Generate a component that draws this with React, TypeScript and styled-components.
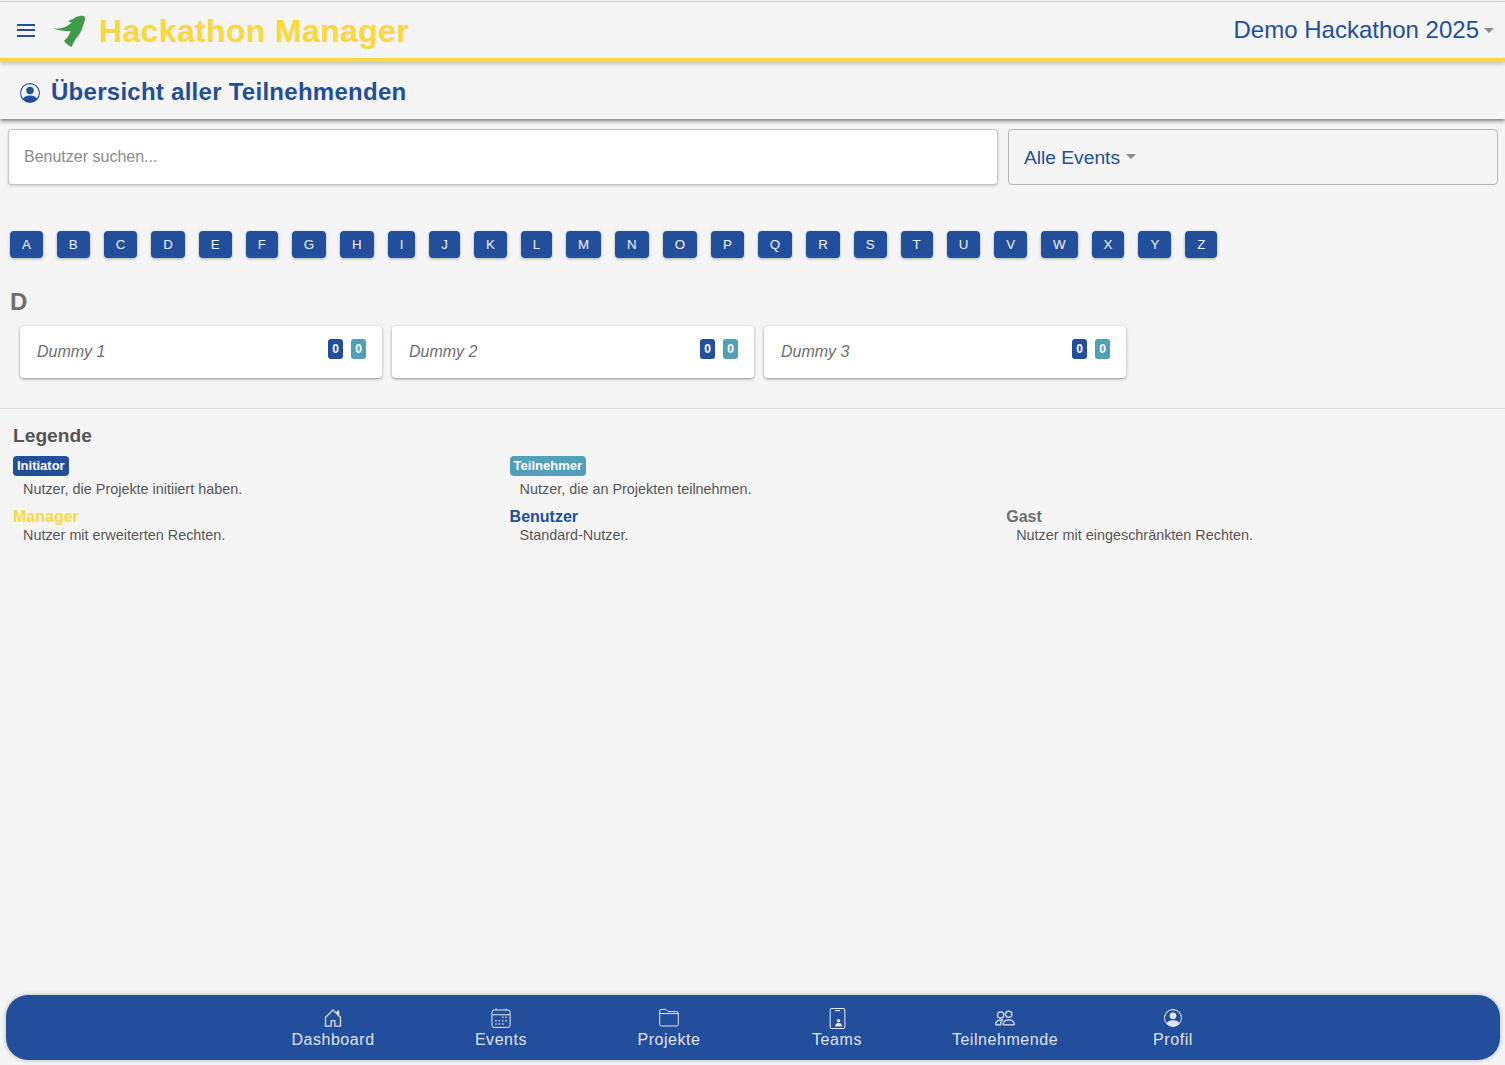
import React from "react";
import styled, { createGlobalStyle } from "styled-components";
import { BsHouseDoor, BsPeople, BsPersonCircle } from "react-icons/bs";

const BLUE = "#234e9b";
const YELLOW = "#fbd93d";
const TEAL = "#50a0b9";

const Global = createGlobalStyle`
  html, body { margin: 0; padding: 0; background: #f5f5f5; }
  body { font-family: "Liberation Sans", Arial, sans-serif; }
  * { box-sizing: border-box; }
`;

const Page = styled.div`
  height: 1065px;
  display: flex;
  flex-direction: column;
  overflow: hidden;
  background: #f5f5f5;
`;

const TopBar = styled.header`
  height: 61px;
  margin-top: 1px;
  border-top: 1px solid #cfcfcf;
  border-bottom: 4px solid ${YELLOW};
  display: flex;
  align-items: center;
  padding: 0 11px 0 17px;
  background: #f5f5f5;
  box-shadow: 0 2px 4px rgba(0, 0, 0, 0.2);
  position: relative;
  z-index: 2;
`;

const Burger = styled.div`
  width: 18px;
  height: 13px;
  display: flex;
  flex-direction: column;
  justify-content: space-between;
  margin-right: 17px;
  span { display: block; height: 2px; background: ${BLUE}; }
`;

const Logo = styled.svg`
  width: 36px;
  height: 34px;
  margin-right: 11px;
  flex: none;
`;

const Brand = styled.div`
  padding-top: 2px;
  font-size: 32px;
  font-weight: 700;
  letter-spacing: 0.35px;
  color: ${YELLOW};
  text-shadow: 0 0 1px rgba(0, 0, 0, 0.08);
`;

const EventSwitch = styled.div`
  margin-left: auto;
  display: flex;
  align-items: center;
  gap: 5px;
  font-size: 24px;
  color: ${BLUE};
`;

const Caret = styled.span`
  display: inline-block;
  border-left: 5px solid transparent;
  border-right: 5px solid transparent;
  border-top: 5px solid #8a8a8a;
`;

const SubHeader = styled.div`
  height: 57px;
  display: flex;
  align-items: center;
  gap: 11px;
  padding: 2px 0 0 20px;
  background: #f5f5f5;
  box-shadow: 0 2px 4px rgba(0, 0, 0, 0.5);
  position: relative;
  z-index: 1;
`;

const SubIcon = styled(BsPersonCircle)`
  width: 20px;
  height: 20px;
  margin-top: 3px;
  color: ${BLUE};
`;

const SubTitle = styled.h1`
  margin: 0;
  font-size: 24px;
  font-weight: 700;
  letter-spacing: 0.27px;
  color: ${BLUE};
`;

const Filters = styled.div`
  display: flex;
  gap: 10px;
  padding: 10px 7px 0 8px;
`;

const Search = styled.div`
  flex: 0 0 990px;
  height: 56px;
  display: flex;
  align-items: center;
  padding: 0 15px;
  background: #fff;
  border: 1px solid #c6c6c6;
  border-radius: 4px;
  box-shadow: 0 1px 3px rgba(0, 0, 0, 0.18);
  font-size: 16px;
  color: #8b8b8b;
`;

const Select = styled.div`
  flex: 1;
  height: 56px;
  display: flex;
  align-items: center;
  gap: 6px;
  padding: 2px 15px 0;
  border: 1px solid #b4b4b4;
  border-radius: 4px;
  font-size: 19.2px;
  color: ${BLUE};
  ${Caret} { margin-bottom: 3px; }
`;

const Letters = styled.div`
  display: flex;
  gap: 13.94px;
  padding: 46px 0 0 10px;
`;

const Letter = styled.div`
  height: 27px;
  padding: 0 12px;
  display: flex;
  align-items: center;
  background: ${BLUE};
  border-radius: 4px;
  box-shadow: 0 1px 3px rgba(0, 0, 0, 0.3);
  color: #f1f4fa;
  font-size: 13.33px;
`;

const GroupLetter = styled.h2`
  margin: 31px 0 0 10px;
  font-size: 24px;
  line-height: 25px;
  font-weight: 700;
  color: #6f6f6f;
`;

const Cards = styled.div`
  display: flex;
  gap: 10px;
  padding: 12px 0 0 20px;
`;

const Card = styled.div`
  width: 362px;
  height: 52px;
  display: flex;
  justify-content: space-between;
  padding: 13px 16px 0 17px;
  background: #fff;
  border-radius: 4px;
  box-shadow: 0 1px 3px rgba(0, 0, 0, 0.4);
`;

const CardName = styled.span`
  font-size: 16px;
  font-style: italic;
  line-height: 25px;
  color: #6f6f6f;
`;

const Counts = styled.div`
  display: flex;
  gap: 8px;
`;

const Count = styled.span<{ $tone: string }>`
  width: 15px;
  height: 20px;
  display: flex;
  align-items: center;
  justify-content: center;
  background: ${(p) => p.$tone};
  border-radius: 3px;
  color: #fff;
  font-size: 12px;
  font-weight: 700;
`;

const Legend = styled.section`
  margin-top: 30px;
  padding: 15px 13px 0;
  border-top: 1px solid #dedede;
`;

const LegendTitle = styled.h3`
  margin: 0 0 9px;
  font-size: 19.2px;
  line-height: 23px;
  font-weight: 700;
  color: #555;
`;

const LegendGrid = styled.div`
  display: grid;
  grid-template-columns: repeat(3, 496.6px);
  grid-auto-rows: 45px;
`;

const LegendItem = styled.div`
  display: flex;
  flex-direction: column;
  align-items: flex-start;
`;

const RoleBadge = styled.span<{ $tone: string }>`
  height: 20px;
  display: flex;
  align-items: center;
  padding: 0 4px 1px;
  background: ${(p) => p.$tone};
  border-radius: 4px;
  color: #fff;
  font-size: 13px;
  font-weight: 700;
`;

const RoleName = styled.span<{ $tone: string }>`
  height: 20px;
  line-height: 20px;
  margin-top: 6px;
  color: ${(p) => p.$tone};
  font-size: 16px;
  font-weight: 700;
`;

const RoleText = styled.span<{ $tall?: boolean }>`
  padding-left: 10px;
  margin-top: ${(p) => (p.$tall ? "5px" : "0")};
  line-height: 17px;
  font-size: 14.4px;
  color: #555;
`;

const Spacer = styled.div`
  flex: 1;
`;

const BottomNav = styled.nav`
  flex: none;
  height: 65px;
  margin: 0 5px 5px 6px;
  display: flex;
  justify-content: center;
  background: ${BLUE};
  border-radius: 22px;
  box-shadow: 0 0 5px rgba(0, 0, 0, 0.25);
`;

const NavItem = styled.div`
  width: 168px;
  display: flex;
  flex-direction: column;
  align-items: center;
  padding-top: 12px;
  color: rgba(255, 255, 255, 0.87);
  font-size: 16px;
  letter-spacing: 0.55px;
  line-height: 19px;
`;

const NavIcon = styled.span<{ $size: number }>`
  height: 22px;
  margin-bottom: 1px;
  display: flex;
  align-items: center;
  svg { display: block; width: ${(p) => p.$size}px; height: ${(p) => p.$size}px; }
`;

const CalendarIcon = () => {
  const dots = [
    [11.7, 9.3], [15, 9.3],
    [5, 12.7], [8.3, 12.7], [11.7, 12.7], [15, 12.7],
    [5, 16], [8.3, 16], [11.7, 16],
  ];
  return (
    <svg viewBox="0 0 20 20" fill="none" stroke="currentColor" strokeWidth="1">
      <rect x="0.9" y="2" width="18.2" height="17.4" rx="2.2" />
      <path d="M1 6.8H19M5 0.5V2M15 0.5V2" />
      {dots.map(([x, y]) => (
        <rect key={`${x}-${y}`} x={x - 0.7} y={y - 0.7} width="1.4" height="1.4" fill="currentColor" stroke="none" />
      ))}
    </svg>
  );
};

const FolderIcon = () => (
  <svg viewBox="0 0 20 20" fill="none" stroke="currentColor" strokeWidth="1">
    <path d="M.7 16.4V3A1.6 1.6 0 0 1 2.3 1.4H7L9 3.6H17.7A1.6 1.6 0 0 1 19.3 5.2V16.4A1.6 1.6 0 0 1 17.7 18H2.3A1.6 1.6 0 0 1 .7 16.4Z" />
    <path d="M.7 5.6H19.3" />
  </svg>
);

const TeamIcon = () => (
  <svg viewBox="0 0 16 16">
    <rect x="2.4" y="0.4" width="11.2" height="15.2" rx="1.4" fill="none" stroke="currentColor" strokeWidth="0.8" />
    <path d="M6.5 2h3" stroke="currentColor" strokeWidth="0.8" strokeLinecap="round" />
    <circle cx="8.8" cy="9.7" r="1.3" fill="currentColor" />
    <path d="M6.2 14.1c0-1.8 1.1-2.6 2.6-2.6s2.6.8 2.6 2.6z" fill="currentColor" />
  </svg>
);

const letters = "ABCDEFGHIJKLMNOPQRSTUVWXYZ".split("");
const nav: [string, number, React.ReactNode][] = [
  ["Dashboard", 20, <BsHouseDoor />],
  ["Events", 20, <CalendarIcon />],
  ["Projekte", 20, <FolderIcon />],
  ["Teams", 21, <TeamIcon />],
  ["Teilnehmende", 20, <BsPeople />],
  ["Profil", 18, <BsPersonCircle />],
];

export default function App() {
  return (
    <Page>
      <Global />
      <TopBar>
        <Burger><span /><span /><span /></Burger>
        <Logo viewBox="0 0 36 34">
          <path
            fill="#419a49"
            d="M.7 15.3C4 15.9 9 15.6 13 14C16 12.5 18 11 19.7 9.7C18 9.5 17 8.7 16.3 7.7C18.5 7.5 20 6.3 22 5.3C24 3.8 26 3 28 3C30 2.6 32 3 32.6 3.7C33.4 5 33 6 33 7C32.5 9 31.5 11.5 30.7 13.7C30 16 29 18.3 28 20.3C26.5 23 24.5 24.7 23 27C22 28.7 20.7 31.5 19.7 33.7C18.5 33.5 17.3 33 16.3 32C14.7 31 13 29.5 12 27.7C13.5 26.5 15.2 25 16.3 23C17.3 21.5 18.2 20 18.7 18.3C15 18.3 12 18.2 9 17.6C6 17 3 16.2 .7 15.3Z"
          />
        </Logo>
        <Brand>Hackathon Manager</Brand>
        <EventSwitch>Demo Hackathon 2025<Caret /></EventSwitch>
      </TopBar>
      <SubHeader>
        <SubIcon />
        <SubTitle>Übersicht aller Teilnehmenden</SubTitle>
      </SubHeader>
      <Filters>
        <Search>Benutzer suchen...</Search>
        <Select>Alle Events<Caret /></Select>
      </Filters>
      <Letters>
        {letters.map((l) => <Letter key={l}>{l}</Letter>)}
      </Letters>
      <GroupLetter>D</GroupLetter>
      <Cards>
        {["Dummy 1", "Dummy 2", "Dummy 3"].map((n) => (
          <Card key={n}>
            <CardName>{n}</CardName>
            <Counts>
              <Count $tone={BLUE}>0</Count>
              <Count $tone={TEAL}>0</Count>
            </Counts>
          </Card>
        ))}
      </Cards>
      <Legend>
        <LegendTitle>Legende</LegendTitle>
        <LegendGrid>
          <LegendItem>
            <RoleBadge $tone={BLUE}>Initiator</RoleBadge>
            <RoleText $tall>Nutzer, die Projekte initiiert haben.</RoleText>
          </LegendItem>
          <LegendItem>
            <RoleBadge $tone={TEAL}>Teilnehmer</RoleBadge>
            <RoleText $tall>Nutzer, die an Projekten teilnehmen.</RoleText>
          </LegendItem>
          <div />
          <LegendItem>
            <RoleName $tone={YELLOW}>Manager</RoleName>
            <RoleText>Nutzer mit erweiterten Rechten.</RoleText>
          </LegendItem>
          <LegendItem>
            <RoleName $tone={BLUE}>Benutzer</RoleName>
            <RoleText>Standard-Nutzer.</RoleText>
          </LegendItem>
          <LegendItem>
            <RoleName $tone="#6f6f6f">Gast</RoleName>
            <RoleText>Nutzer mit eingeschränkten Rechten.</RoleText>
          </LegendItem>
        </LegendGrid>
      </Legend>
      <Spacer />
      <BottomNav>
        {nav.map(([label, size, icon]) => (
          <NavItem key={label}>
            <NavIcon $size={size}>{icon}</NavIcon>
            {label}
          </NavItem>
        ))}
      </BottomNav>
    </Page>
  );
}
